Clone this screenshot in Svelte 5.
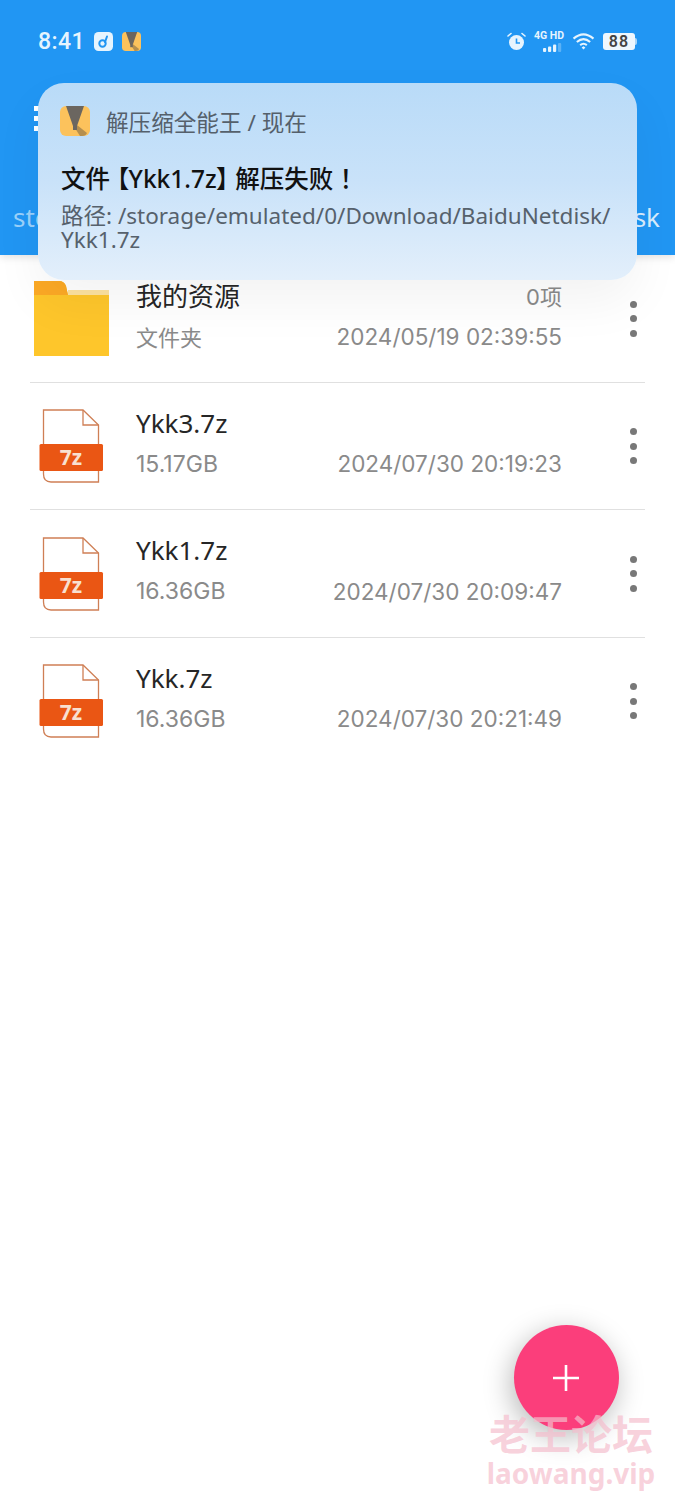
<script>
  const crumbs = ["storage", "BaiduNetdisk"];
  const files = [
    { name: "Ykk3.7z", size: "15.17GB", date: "2024/07/30 20:19:23" },
    { name: "Ykk1.7z", size: "16.36GB", date: "2024/07/30 20:09:47" },
    { name: "Ykk.7z", size: "16.36GB", date: "2024/07/30 20:21:49" }
  ];
</script>

{#snippet zipIcon()}
  <svg viewBox="0 0 30 30" class="zip">
    <rect width="30" height="30" rx="6" fill="#fcc25c" />
    <path d="M6 0H24L17 20H13Z" fill="#6b6660" />
    <path d="M13 19H17L27 27Q26 30 22 30H20Z" fill="#b58f4f" />
    <rect x="13" y="17" width="4" height="7" fill="#6b6660" />
  </svg>
{/snippet}

{#snippet dots()}
  <button class="more" aria-label="more">
    <span></span><span></span><span></span>
  </button>
{/snippet}

<div class="page">
  <header class="appbar">
    <div class="status">
      <div class="status-left">
        <span class="time">8:41</span>
        <svg viewBox="0 0 19 19" class="note">
          <rect width="19" height="19" rx="4.5" fill="#e6f4fe" />
          <circle cx="8.5" cy="11.5" r="3.2" fill="none" stroke="#2196f3" stroke-width="2" />
          <path d="M11 10L13 4.5" stroke="#2196f3" stroke-width="2" stroke-linecap="round" />
        </svg>
        <span class="mini-zip">{@render zipIcon()}</span>
      </div>
      <div class="status-right">
        <svg viewBox="0 0 19 19" class="alarm">
          <circle cx="9.5" cy="10.5" r="7.5" fill="#e6f4fe" />
          <path d="M9.5 6.5V11H13" fill="none" stroke="#2196f3" stroke-width="1.6" />
          <path d="M1 4L4 1.5M18 4L15 1.5" stroke="#e6f4fe" stroke-width="1.6" stroke-linecap="round" />
        </svg>
        <div class="net">
          <span class="net-label">4G HD</span>
          <svg viewBox="0 0 22 9" class="bars">
            <rect x="1" y="5" width="3.2" height="4" rx="1" fill="#e6f4fe" />
            <rect x="6" y="3.5" width="3.2" height="5.5" rx="1" fill="#e6f4fe" />
            <rect x="11" y="1.5" width="3.2" height="7.5" rx="1" fill="#e6f4fe" />
            <rect x="16" y="0" width="3.2" height="9" rx="1" fill="#e6f4fe" opacity=".3" />
          </svg>
        </div>
        <svg viewBox="0 0 24 20" class="wifi">
          <g fill="none" stroke="#e6f4fe" stroke-width="2.2">
            <path d="M1.5 7Q12 -2 22.5 7" />
            <path d="M5 10.5Q12 4.5 19 10.5" />
            <path d="M8.5 13.8Q12 11 15.5 13.8" />
          </g>
          <path d="M10 16.2L12 15L14 16.2L12 18.5Z" fill="#e6f4fe" />
        </svg>
        <div class="battery">
          <span class="battery-body">88</span>
          <span class="battery-cap"></span>
        </div>
      </div>
    </div>
    <div class="toolbar">
      <span class="menu"><i></i><i></i><i></i></span>
    </div>
    <div class="path">
      {#each crumbs as crumb}
        <span class="crumb">{crumb}</span>
      {/each}
    </div>
  </header>

  <main class="list">
    <div class="row">
      <div class="icon">
        <svg viewBox="0 0 75 75" class="folder">
          <path d="M0 0H25Q30 0 32 5L34 14H75V75H0Z" fill="#fec62b" />
          <path d="M34 9H75V14H34Z" fill="#fde3a0" />
          <path d="M0 0H25Q30 0 32 5L34 14H0Z" fill="#fca925" />
        </svg>
      </div>
      <div class="info">
        <div class="line">
          <span class="name">我的资源</span>
          <span class="meta">0项</span>
        </div>
        <div class="line">
          <span class="meta">文件夹</span>
          <span class="meta date">2024/05/19 02:39:55</span>
        </div>
      </div>
      {@render dots()}
    </div>

    {#each files as file}
      <div class="row">
        <div class="icon">
          <svg viewBox="0 0 65 74" class="archive">
            <path d="M4.5 1H44L59.5 16V73H12Q4.5 73 4.5 65Z" fill="#fff" stroke="#cf7f55" stroke-width="1.3" />
            <path d="M44 1V16H59.5" fill="none" stroke="#cf7f55" stroke-width="1.3" />
            <rect x="0.5" y="35" width="63.5" height="27" rx="1.5" fill="#ea5614" />
            <text x="32" y="56" text-anchor="middle" class="badge">7z</text>
          </svg>
        </div>
        <div class="info">
          <div class="line">
            <span class="name">{file.name}</span>
          </div>
          <div class="line">
            <span class="meta size">{file.size}</span>
            <span class="meta date">{file.date}</span>
          </div>
        </div>
        {@render dots()}
      </div>
    {/each}
  </main>

  <div class="notice">
    <div class="notice-head">
      <span class="notice-icon">{@render zipIcon()}</span>
      <span>解压缩全能王 / 现在</span>
    </div>
    <div class="notice-title">文件 【Ykk1.7z】 解压失败 ！</div>
    <div class="notice-body">路径: /storage/emulated/0/Download/BaiduNetdisk/<br />Ykk1.7z</div>
  </div>

  <button class="fab" aria-label="add">
    <svg viewBox="0 0 28 28" width="28" height="28">
      <path d="M14 1V27M1 14H27" stroke="#fff" stroke-width="2.6" />
    </svg>
  </button>

  <div class="watermark">
    <div class="wm-cn">老王论坛</div>
    <div class="wm-en">laowang.vip</div>
  </div>
</div>

<style>
  :global(body) {
    margin: 0;
    background: #fff;
  }

  .page {
    position: relative;
    width: 675px;
    height: 1500px;
    overflow: hidden;
    font-family: "Noto Sans", "Noto Sans CJK SC", sans-serif;
    background: #fff;
  }

  .appbar {
    height: 255px;
    background: #2196f3;
    display: flex;
    flex-direction: column;
    box-shadow: 0 2px 8px rgba(0, 0, 0, 0.12);
  }

  .status {
    height: 83px;
    padding: 0 38px;
    display: flex;
    justify-content: space-between;
    align-items: center;
  }

  .status-left,
  .status-right {
    display: flex;
    align-items: center;
  }

  .status-left {
    gap: 9px;
  }

  .time {
    font-family: Roboto, sans-serif;
    font-size: 23px;
    font-weight: 500;
    letter-spacing: 0.4px;
    color: #e6f4fe;
  }

  .note,
  .mini-zip {
    width: 19px;
    height: 19px;
    display: block;
  }

  .zip {
    display: block;
    width: 100%;
    height: 100%;
  }

  .status-right {
    gap: 8px;
  }

  .alarm {
    width: 19px;
    height: 19px;
  }

  .net {
    width: 30px;
    display: flex;
    flex-direction: column;
    align-items: flex-end;
    line-height: 1;
  }

  .net-label {
    font-family: Roboto, sans-serif;
    font-size: 10.5px;
    font-weight: 700;
    color: #e6f4fe;
    white-space: nowrap;
  }

  .bars {
    width: 22px;
    height: 9px;
    margin-top: 1px;
  }

  .wifi {
    width: 23px;
    height: 19px;
  }

  .battery {
    display: flex;
    align-items: center;
  }

  .battery-body {
    width: 32px;
    height: 17px;
    border-radius: 3px;
    background: #eef7fe;
    color: #444;
    font-family: Roboto, sans-serif;
    font-size: 16px;
    font-weight: 600;
    line-height: 17px;
    text-align: center;
    letter-spacing: 1px;
  }

  .battery-cap {
    width: 2px;
    height: 7px;
    border-radius: 0 2px 2px 0;
    background: #a8d6fa;
  }

  .toolbar {
    height: 70px;
    padding-left: 34px;
    display: flex;
    align-items: center;
  }

  .menu {
    display: flex;
    flex-direction: column;
    gap: 5px;
  }

  .menu i {
    width: 6px;
    height: 5px;
    background: #fff;
  }

  .path {
    margin-top: 47px;
    display: flex;
    justify-content: space-between;
    padding: 0 15px 0 13px;
    font-size: 26px;
    line-height: 34px;
    color: #9bd1fa;
    white-space: nowrap;
  }

  .crumb:last-child {
    color: #d8ecfd;
  }

  .list {
    display: flex;
    flex-direction: column;
  }

  .row {
    height: 127.4px;
    margin: 0 30px;
    display: flex;
    align-items: center;
    box-sizing: border-box;
    border-bottom: 1px solid #e0e0e0;
  }

  .row:first-child {
    height: 128px;
  }

  .row:last-child {
    border-bottom: none;
  }

  .icon {
    width: 106px;
    display: flex;
    flex-shrink: 0;
  }

  .folder {
    width: 75px;
    height: 75px;
    margin-left: 4px;
    margin-top: -1px;
  }

  .archive {
    width: 65px;
    height: 74px;
    margin-left: 9px;
  }

  .badge {
    font-family: "Noto Sans", sans-serif;
    font-size: 21px;
    font-weight: 700;
    fill: #f8e0d0;
  }

  .info {
    width: 426px;
    display: flex;
    flex-direction: column;
    gap: 6px;
    margin-top: -6px;
  }

  .line {
    display: flex;
    justify-content: space-between;
    align-items: center;
    height: 35px;
  }

  .name {
    font-size: 26px;
    color: #262626;
  }

  .meta {
    font-family: Inter, "Noto Sans CJK SC", sans-serif;
    font-size: 22px;
    color: #8a8a8a;
  }

  .size {
    font-size: 23px;
  }

  .date {
    font-size: 22.5px;
  }

  .more {
    margin-left: 68px;
    padding: 0;
    border: none;
    background: none;
    display: flex;
    flex-direction: column;
    gap: 7.5px;
  }

  .more span {
    width: 7px;
    height: 7px;
    border-radius: 50%;
    background: #787878;
  }

  .notice {
    position: absolute;
    left: 38px;
    top: 83px;
    width: 599px;
    height: 197px;
    box-sizing: border-box;
    padding: 23px 23px 0;
    border-radius: 26px;
    background: linear-gradient(180deg, #b9dbf8 0%, #c9e2f9 50%, #e3effb 100%);
    box-shadow: 0 22px 50px rgba(0, 0, 0, 0.05);
  }

  .notice-head {
    display: flex;
    align-items: center;
    gap: 16px;
    font-size: 22.6px;
    color: #55606b;
    height: 30px;
  }

  .notice-icon {
    width: 30px;
    height: 30px;
    margin-left: -1px;
  }

  .notice-title {
    margin-top: 27px;
    font-size: 24.5px;
    line-height: 32px;
    font-weight: 500;
    color: #111;
    white-space: nowrap;
    font-feature-settings: "palt";
  }

  .notice-body {
    margin-top: 9px;
    font-size: 22.5px;
    line-height: 24px;
    color: #56616c;
    white-space: nowrap;
  }

  .fab {
    position: absolute;
    left: 514px;
    top: 1325px;
    width: 105px;
    height: 105px;
    padding: 0 2px 0 0;
    border: none;
    border-radius: 50%;
    background: #fb3e7b;
    display: flex;
    align-items: center;
    justify-content: center;
    box-shadow: -3px 7px 28px rgba(0, 0, 0, 0.28);
  }

  .watermark {
    position: absolute;
    left: 485px;
    top: 1407px;
    width: 172px;
    text-align: center;
    color: rgba(245, 190, 205, 0.7);
    font-weight: 700;
    line-height: 1;
  }

  .wm-cn {
    font-family: "Noto Sans CJK SC", sans-serif;
    font-size: 41px;
    line-height: 50px;
    white-space: nowrap;
  }

  .wm-en {
    font-family: "Noto Sans", sans-serif;
    font-size: 28px;
    line-height: 33px;
  }
</style>
